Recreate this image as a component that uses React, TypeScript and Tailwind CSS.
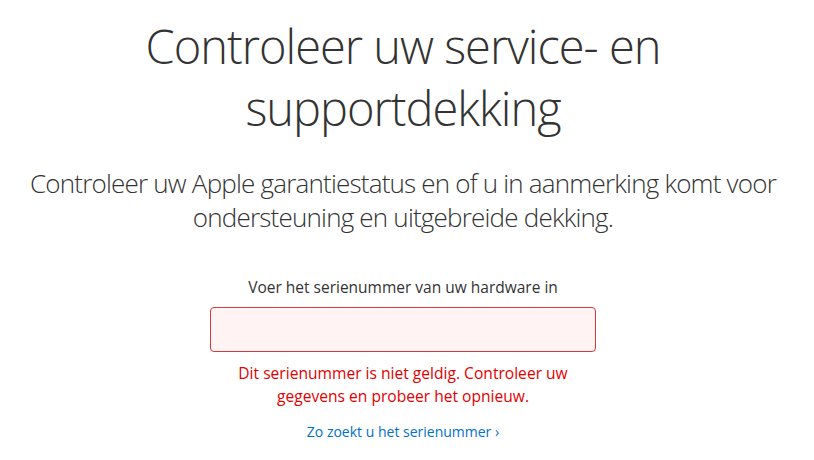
import React from 'react';

export default function App() {
  return (
    <div className="min-h-screen bg-white flex flex-col items-center pr-[8px] text-[#333] font-['Open_Sans',sans-serif]">
      <h1 className="mt-[15px] text-[47px] leading-[62px] font-light text-center tracking-[-1px]">
        Controleer uw service- en
        <br />
        supportdekking
      </h1>
      <p className="mt-[27px] text-[26px] leading-[34px] font-light text-center tracking-[-0.8px]">
        Controleer uw Apple garantiestatus en of u in aanmerking komt voor
        <br />
        ondersteuning en uitgebreide dekking.
      </p>
      <label className="mt-[42px] text-[15.5px] leading-[22px] text-[#333] text-center">
        Voer het serienummer van uw hardware in
      </label>
      <input
        type="text"
        className="mt-[9px] w-[386px] h-[45px] rounded-[4px] border border-[#d33a3a] bg-[#fff3f4] outline-none px-3"
      />
      <p className="mt-[10px] text-[15.6px] leading-[23px] text-[#e30000] text-center">
        Dit serienummer is niet geldig. Controleer uw
        <br />
        gegevens en probeer het opnieuw.
      </p>
      <a href="#" className="mt-[14px] text-[14px] leading-[20px] text-[#0070c9]">
        Zo zoekt u het serienummer ›
      </a>
    </div>
  );
}
